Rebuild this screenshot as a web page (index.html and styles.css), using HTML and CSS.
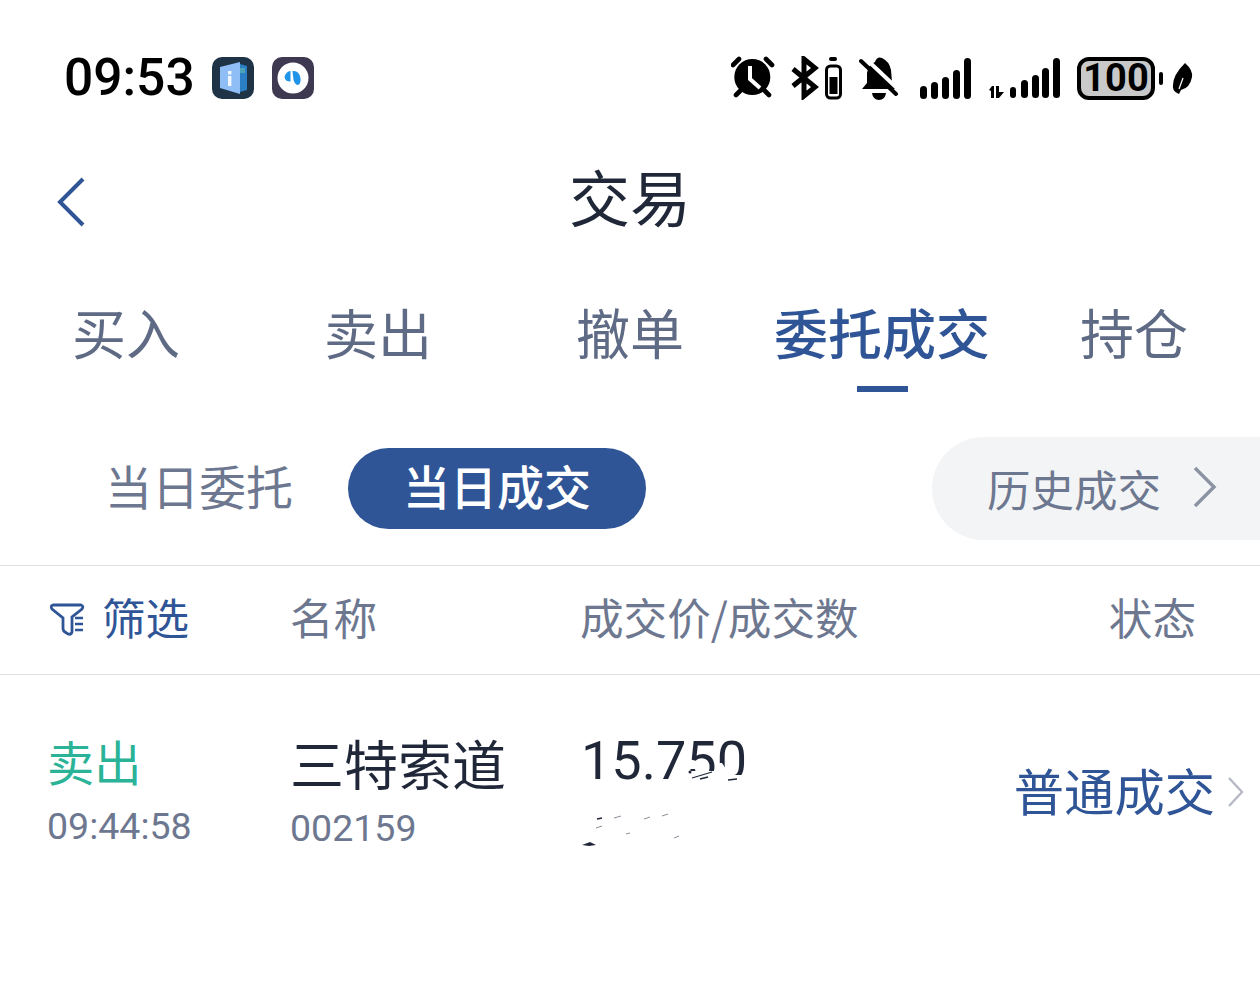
FILE: index.html
```html
<!DOCTYPE html>
<html lang="zh-CN">
<head>
    <meta charset="UTF-8">
    <meta name="viewport" content="width=device-width, initial-scale=1.0">
    <title>交易</title>
    <link rel="stylesheet" href="styles.css">
</head>
<body>
    <div class="status-bar">
        <div class="status-left">
            <span class="clock">09:53</span>
            <svg class="app-icon" width="42" height="42" viewBox="0 0 42 42">
                <rect width="42" height="42" rx="10" fill="#1f3347"/>
                <path d="M8 10 L28 5 V37 L8 31 Z" fill="#8fbdf5"/>
                <path d="M28 7 L35 9 V33 L28 35 Z" fill="#2b7fc4"/>
                <rect x="28" y="11" width="5" height="5" fill="#4fa3b8"/>
                <rect x="16" y="14" width="3.4" height="3.4" fill="#f2f7ff"/>
                <rect x="16" y="19" width="3.4" height="10" fill="#f2f7ff"/>
            </svg>
            <svg class="app-icon app-icon-second" width="42" height="42" viewBox="0 0 42 42">
                <rect width="42" height="42" rx="10" fill="#3e3850"/>
                <circle cx="21" cy="21" r="15.5" fill="#ffffff"/>
                <path d="M12.5 20 Q14 14.5 18.500 14 L18.500 24.500 Q13 24.500 12.5 20 Z" fill="#1f94e8"/>
                <path d="M20.5 14 Q27 13 28.500 21 Q29 28 25.500 28 Q23 27.500 21.500 23 Z" fill="#1f94e8"/>
            </svg>
        </div>
        <div class="status-right">
            <svg width="60" height="44" viewBox="0 0 60 44">
                <circle cx="21.300" cy="21" r="18" fill="#000"/>
                <path d="M19 10 V23 L29 32" fill="none" stroke="#fff" stroke-width="4"/>
                <path d="M2 9 L8 3 M41 9 L35 3 M5 39 L10 34 M38 39 L33 34" stroke="#000" stroke-width="4.600" stroke-linecap="round"/>
            </svg>
            <svg width="68" height="44" viewBox="0 0 68 44">
                <path d="M2 13 L24 31 L13 40 V3 L24 12 L2 30" fill="none" stroke="#000" stroke-width="5"/>
                <rect x="35.500" y="10" width="14" height="32" rx="4" fill="none" stroke="#000" stroke-width="3"/>
                <rect x="38.500" y="21" width="8" height="17" fill="#000"/>
                <rect x="38" y="1" width="8" height="4" rx="2" fill="#000"/>
            </svg>
            <svg width="61" height="44" viewBox="0 0 61 44">
                <path d="M3 33 L8 27 V17 Q9 9 16 6 Q18 0 23 2 Q30 5 32 14 L33 26 L37 33 Z" fill="#000"/>
                <path d="M13 37 H27 Q26 44 20 44 Q14 44 13 37 Z" fill="#000"/>
                <path d="M5 1 L40 34" stroke="#fff" stroke-width="4"/>
                <path d="M2 5 L37 38" stroke="#000" stroke-width="4" stroke-linecap="round"/>
            </svg>
            <svg width="69" height="44" viewBox="0 0 69 44">
                <g fill="#000">
                    <rect x="0" y="30" width="7" height="13" rx="3.500"/>
                    <rect x="11" y="26" width="7" height="17" rx="3.500"/>
                    <rect x="22" y="21" width="7" height="22" rx="3.500"/>
                    <rect x="33" y="14" width="7" height="29" rx="3.500"/>
                    <rect x="44" y="2" width="7" height="41" rx="3.500"/>
                </g>
            </svg>
            <svg width="88" height="44" viewBox="0 0 88 44">
                <g fill="#000">
                    <path d="M0 34 L3 30 H5 V42 H2 V35 Z M7 30 H10 V36 H15 L10 42 H7 Z"/>
                    <rect x="21" y="31" width="6" height="11" rx="3"/>
                    <rect x="32" y="24" width="7" height="18" rx="3.500"/>
                    <rect x="43" y="19" width="7" height="23" rx="3.500"/>
                    <rect x="53" y="12" width="7" height="30" rx="3.500"/>
                    <rect x="64" y="2" width="7" height="40" rx="3.500"/>
                </g>
            </svg>
            <div class="battery">100</div>
            <span class="battery-nub"></span>
            <svg class="leaf" width="21" height="32" viewBox="0 0 21 32">
                <path d="M13 0 Q21 7 20 14 Q18 25 9 27 L7 31 L5 30 Q0 27 1 22 Q1 12 13 0 Z" fill="#000"/>
                <path d="M7 26 L11 15" stroke="#fff" stroke-width="1.200"/>
            </svg>
        </div>
    </div>

    <div class="title-bar">
        <svg class="back" width="28" height="50" viewBox="0 0 28 50">
            <path d="M26 2 L3 25 L26 48" fill="none" stroke="#2f5597" stroke-width="4"/>
        </svg>
        <h1>交易</h1>
    </div>

    <div class="tabs">
        <div class="tab">买入</div>
        <div class="tab">卖出</div>
        <div class="tab">撤单</div>
        <div class="tab active">委托成交</div>
        <div class="tab">持仓</div>
    </div>

    <div class="sub-tabs">
        <div class="sub-tab">当日委托</div>
        <div class="sub-tab active">当日成交</div>
        <div class="history">
            <span>历史成交</span>
            <svg width="24" height="42" viewBox="0 0 24 42">
                <path d="M2 2 L21 21 L2 40" fill="none" stroke="#8b93a3" stroke-width="3.400"/>
            </svg>
        </div>
    </div>

    <div class="table-head">
        <div class="filter">
            <svg width="36" height="34" viewBox="0 0 36 34">
                <path d="M3 2 H31 Q34 3 32 6 L22 14 V29 Q21 32 18 31 L15 29 Q13 28 13 25 V15 L2 6 Q0 3 3 2 Z" fill="none" stroke="#2f5597" stroke-width="2.800"/>
                <path d="M25 15 H33 M25 21 H33 M25 27 H33" stroke="#2f5597" stroke-width="2.400"/>
            </svg>
            <span>筛选</span>
        </div>
        <div>名称</div>
        <div>成交价/成交数</div>
        <div class="col-status">状态</div>
    </div>

    <div class="trade-row">
        <div class="cell-side">
            <div class="side">卖出</div>
            <div class="muted">09:44:58</div>
        </div>
        <div class="cell-name">
            <div class="stock">三特索道</div>
            <div class="muted code">002159</div>
        </div>
        <div class="cell-price">
            <div class="price">15.750</div>
            <!-- the rest of the price is wiped out in the source picture -->
            <svg class="smudge" width="180" height="100" viewBox="0 0 180 100">
                <path d="M105 11 L134 11 L137 3 L141 3 L149 15 L167 15 L167 20 L170 20 V60 H0 V20 H105 Z" fill="#fff"/>
                <path d="M111 18 L131 12 M119 19 L127 17 M147 20 L156 19" stroke="#1f2738" stroke-width="1.300"/>
                <circle cx="109" cy="12" r="1.500" fill="#1f2738"/>
                <path d="M1 85 L9 82 L15 85 L8 86 Z" fill="#1f2738"/>
                <path d="M16 59 L21 58" stroke="#1f2738" stroke-width="1.600"/>
                <path d="M15 68 L21 66 M33 58 L40 56 M63 59 L69 57 M81 56 L87 54 M93 78 L98 76 M45 74 L49 73" stroke="#8a8f9a" stroke-width="1"/>
            </svg>
        </div>
        <div class="cell-status">
            <span>普通成交</span>
            <svg width="16" height="30" viewBox="0 0 16 30">
                <path d="M1 1 L14 15 L1 29" fill="none" stroke="#b5bac4" stroke-width="2.400"/>
            </svg>
        </div>
    </div>
</body>
</html>
```

FILE: styles.css
```css
* {
    box-sizing: border-box;
}

body {
    font-family: "Noto Sans CJK SC", Roboto, sans-serif;
    background-color: #ffffff;
    color: #1f2738;
    margin: 0;
    padding: 0;
}

svg {
    display: block;
    flex: none;
}

.status-bar {
    height: 154px;
    padding: 56px 67px 0 65px;
    display: flex;
    justify-content: space-between;
    align-items: flex-start;
}

.status-left,
.status-right {
    display: flex;
    align-items: center;
    height: 44px;
}

.clock {
    font-family: Roboto, sans-serif;
    font-size: 51.500px;
    font-weight: 500;
    color: #000000;
    line-height: 44px;
    width: 148px;
    margin-left: -1px;
}

.app-icon-second {
    margin-left: 18px;
}

.battery {
    width: 78px;
    height: 43px;
    background-color: #c9c9c9;
    border: 4px solid #000000;
    border-radius: 12px;
    font-family: Roboto, sans-serif;
    font-size: 38px;
    font-weight: 700;
    line-height: 35px;
    text-align: center;
    color: #000000;
}

.battery-nub {
    width: 4px;
    height: 13px;
    margin: 0 9px 0 4px;
    background-color: #000000;
    border-radius: 2px;
}

.leaf {
    margin-top: 2px;
}

.title-bar {
    height: 92px;
    padding-left: 57px;
    display: grid;
    grid-template-columns: 1fr auto 1fr;
    align-items: center;
}

.title-bar .back {
    grid-column: 1;
    grid-row: 1;
    margin-top: 4px;
}

.title-bar h1 {
    grid-column: 2;
    grid-row: 1;
    margin: 0 0 8px -57px;
    font-size: 61px;
    font-weight: 400;
    line-height: 84px;
}

.tabs {
    height: 146px;
    display: grid;
    grid-template-columns: repeat(5, 252px);
}

.tab {
    position: relative;
    height: 146px;
    padding-top: 30px;
    font-size: 54px;
    line-height: 112px;
    text-align: center;
    color: #5f6b85;
}

.tab.active {
    color: #2f5597;
    font-weight: 500;
}

.tab.active::after {
    content: "";
    position: absolute;
    left: 101px;
    bottom: 0;
    width: 51px;
    height: 6px;
    background-color: #2f5597;
}

.sub-tabs {
    height: 174px;
    border-bottom: 1px solid #dddfe3;
    padding: 45px 0 0 50px;
    display: flex;
    align-items: flex-start;
}

.sub-tab {
    width: 298px;
    height: 81px;
    border-radius: 41px;
    margin-top: 11px;
    font-size: 47px;
    line-height: 74px;
    text-align: center;
    color: #6d7890;
}

.sub-tab.active {
    background-color: #2f5597;
    color: #ffffff;
    font-weight: 500;
}

.history {
    margin-left: auto;
    width: 328px;
    height: 103px;
    background-color: #f3f4f6;
    border-radius: 52px 0 0 52px;
    padding: 0 0 0 55px;
    display: flex;
    align-items: center;
    font-size: 43.500px;
    color: #6d7890;
}

.history svg {
    margin: 0 0 4px 32px;
}

.table-head {
    height: 109px;
    border-bottom: 1px solid #dddfe3;
    padding: 0 64px 8px 50px;
    display: grid;
    grid-template-columns: 240px 290px 1fr auto;
    align-items: center;
    font-size: 43.600px;
    color: #6d7890;
}

.filter {
    display: flex;
    align-items: center;
    gap: 16px;
    color: #2f5597;
}

.filter svg {
    margin-top: 8px;
}

.trade-row {
    padding: 52px 16px 0 47px;
    display: grid;
    grid-template-columns: 243px 291px 1fr auto;
}

.side {
    font-size: 47.200px;
    line-height: 68px;
    color: #2bb398;
}

.muted {
    font-family: Roboto, sans-serif;
    font-size: 37.500px;
    line-height: 52px;
    color: #6d7890;
    margin-top: 5px;
}

.muted.code {
    margin-top: 3px;
}

.stock {
    font-size: 54px;
    line-height: 72px;
}

.cell-price {
    position: relative;
}

.price {
    margin-top: 4px;
    font-family: Roboto, sans-serif;
    font-size: 54px;
    line-height: 60px;
}

.smudge {
    position: absolute;
    left: 0;
    top: 33px;
}

.cell-status {
    display: flex;
    align-items: center;
    gap: 13px;
    height: 120px;
    font-size: 50.300px;
    color: #2f5597;
}

.cell-status span {
    margin-top: 4px;
}

.cell-status svg {
    margin-top: 10px;
}
```
